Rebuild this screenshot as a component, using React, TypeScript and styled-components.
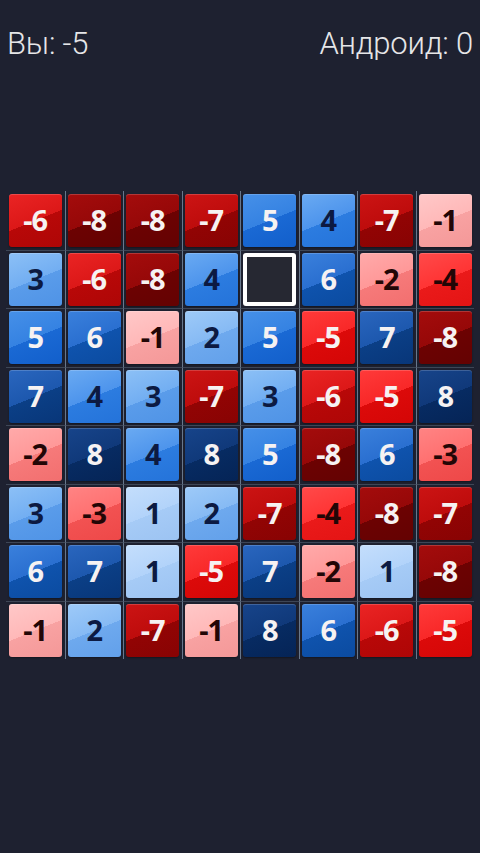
import styled, { createGlobalStyle } from 'styled-components';

const GlobalStyle = createGlobalStyle`
  html, body {
    margin: 0;
    padding: 0;
    background: #1e2130;
  }
  #root {
    min-height: 853px;
  }
`;

// board values, 0 marks the selected empty cell
const board: number[][] = [
  [-6, -8, -8, -7, 5, 4, -7, -1],
  [3, -6, -8, 4, 0, 6, -2, -4],
  [5, 6, -1, 2, 5, -5, 7, -8],
  [7, 4, 3, -7, 3, -6, -5, 8],
  [-2, 8, 4, 8, 5, -8, 6, -3],
  [3, -3, 1, 2, -7, -4, -8, -7],
  [6, 7, 1, -5, 7, -2, 1, -8],
  [-1, 2, -7, -1, 8, 6, -6, -5],
];

// [light half start, light half end, dark half start, dark half end]
const palette: Record<number, [string, string, string, string]> = {
  1: ['#c4defc', '#b2d3fa', '#a6cbf6', '#9cc3f2'],
  2: ['#9ecaf8', '#86baf4', '#6ea9ee', '#62a0ea'],
  3: ['#8cc0f6', '#72aef2', '#5a9cea', '#4f93e6'],
  4: ['#6aaaf2', '#4d94ec', '#2c7ce0', '#2473da'],
  5: ['#4690e8', '#3582e2', '#1a69d4', '#125fcb'],
  6: ['#3a80dc', '#2a6fd0', '#0f53ad', '#0b4ba0'],
  7: ['#2a66be', '#1d58ae', '#0b3f86', '#083679'],
  8: ['#17448a', '#10397a', '#072b62', '#052456'],
  [-1]: ['#ffc8c8', '#ffb8b8', '#f8a2a2', '#f49898'],
  [-2]: ['#ffaaaa', '#ff9898', '#f67a7a', '#f26f6f'],
  [-3]: ['#ff8484', '#ff7070', '#f25252', '#ee4848'],
  [-4]: ['#ff4a4a', '#ff3434', '#ea1a1a', '#e41414'],
  [-5]: ['#ff3a3a', '#f82828', '#dc0a0a', '#d40606'],
  [-6]: ['#ea2424', '#dc1818', '#b80808', '#ae0606'],
  [-7]: ['#cc1414', '#be0c0c', '#920404', '#880303'],
  [-8]: ['#a40c0c', '#960808', '#6c0202', '#640202'],
};

const Page = styled.div`
  display: flex;
  flex-direction: column;
  padding-top: 25px;
  font-family: Roboto, 'Noto Sans', sans-serif;
`;

const ScoreBar = styled.div`
  display: flex;
  justify-content: space-between;
  align-items: center;
  padding: 0 7px 0 7px;
  height: 36px;
  color: #e6e6e8;
  font-size: 31px;
  font-weight: 300;
`;

const Score = styled.span`
  letter-spacing: -0.2px;
`;

const Board = styled.div`
  display: grid;
  grid-template-columns: repeat(8, 58.5px);
  grid-template-rows: repeat(8, 58.5px);
  margin: 130px 0 0 6px;
`;

const Cell = styled.div<{ $row: number; $col: number }>`
  box-sizing: border-box;
  display: flex;
  align-items: center;
  justify-content: center;
  border-left: ${(p) => (p.$col > 0 ? '1px solid #67778c' : 'none')};
  border-top: ${(p) => (p.$row > 0 ? '1px solid #3e4656' : 'none')};
`;

const Tile = styled.div<{ $value: number }>`
  box-sizing: border-box;
  width: 53px;
  height: 53px;
  border-radius: 3px;
  display: flex;
  align-items: center;
  justify-content: center;
  font-family: 'Noto Sans', 'DejaVu Sans', sans-serif;
  font-weight: 700;
  font-size: 29px;
  letter-spacing: -1px;
  padding-bottom: 2px;
  color: ${(p) => (Math.abs(p.$value) >= 5 ? '#f6f2f2' : p.$value > 0 ? '#0c1a42' : '#220606')};
  background: ${(p) => {
    const [a, b, c, d] = palette[p.$value];
    return `linear-gradient(158deg, ${a} 0%, ${b} 50%, ${c} 50%, ${d} 100%)`;
  }};
  box-shadow: inset 0 1px 0 rgba(255, 255, 255, 0.18), 0 1px 2px rgba(0, 0, 0, 0.35);
`;

const EmptyTile = styled.div`
  box-sizing: border-box;
  width: 53px;
  height: 53px;
  border-radius: 3px;
  border: 4px solid #ffffff;
  background: #262832;
`;

export default function App() {
  return (
    <Page>
      <GlobalStyle />
      <ScoreBar>
        <Score>Вы: -5</Score>
        <Score>Андроид: 0</Score>
      </ScoreBar>
      <Board>
        {board.map((row, r) =>
          row.map((v, c) => (
            <Cell key={`${r}-${c}`} $row={r} $col={c}>
              {v === 0 ? <EmptyTile /> : <Tile $value={v}>{v}</Tile>}
            </Cell>
          )),
        )}
      </Board>
    </Page>
  );
}
